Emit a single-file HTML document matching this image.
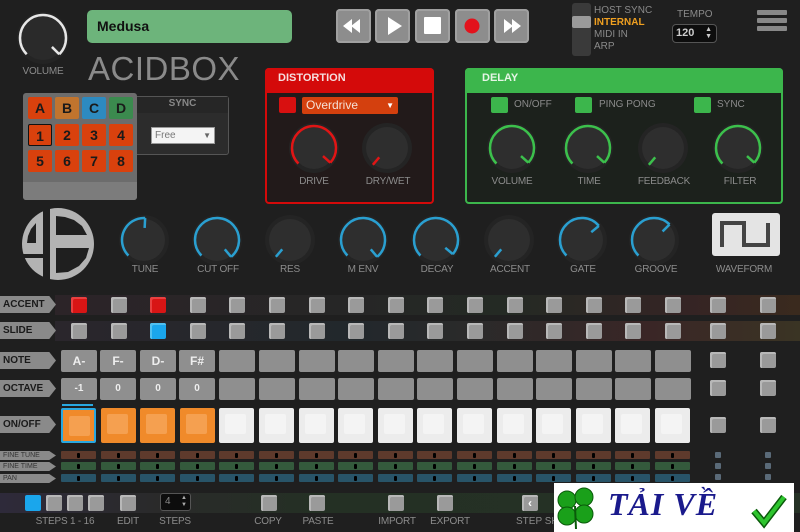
<!DOCTYPE html>
<html><head><meta charset="utf-8">
<style>
*{margin:0;padding:0;box-sizing:border-box}
body{width:800px;height:532px;background:#1f1f1f;overflow:hidden;position:relative;font-family:"Liberation Sans",sans-serif}
.a{position:absolute}
.lbl{position:absolute;z-index:6;color:#8c8c8c;font-size:10px;text-align:center;transform:translateX(-50%);white-space:nowrap;letter-spacing:-0.2px}
.tb{position:absolute;top:9px;width:35px;height:34px;background:#8d8d8d;border-radius:4px;box-shadow:inset 0 0 0 2px #a0a0a0}
.pb{position:absolute;width:24px;height:22px;background:#d9410d;border-radius:2px;font-weight:bold;font-size:14px;color:#1a1a1a;text-align:center;line-height:22px}
.tag{position:absolute;left:0;height:17px;background:#8a8a8a;color:#1a1a1a;font-weight:bold;font-size:10px;line-height:17px;padding-left:3px;clip-path:polygon(0 0,88% 0,100% 50%,88% 100%,0 100%)}
.sq{position:absolute;width:16px;height:16px;background:#9a9a9a;border-radius:2px;box-shadow:inset 2px 2px 0 #b8b8b8}
.nb{position:absolute;width:36px;height:22px;background:#8f8f8f;border-radius:2px;color:#eee;font-weight:bold;font-size:12px;text-align:center;line-height:22px}
.ob{position:absolute;width:35px;height:35px;border-radius:2px}
.st{position:absolute;width:35px;height:8px;border-radius:1px}
.st::after{content:"";position:absolute;left:16px;top:2px;width:3px;height:5px;background:#000;border-radius:1px}
</style></head><body>

<svg class="a" style="left:0;top:0;z-index:3" width="800" height="300" id="knobs"></svg>
<div class="lbl" style="left:43px;top:66px">VOLUME</div>

<div class="a" style="left:87px;top:10px;width:205px;height:33px;background:#6db47b;border-radius:5px;font-weight:bold;font-size:14px;color:#111;line-height:33px;padding-left:10px">Medusa</div>

<div class="tb" style="left:336px"></div>
<div class="tb" style="left:375px"></div>
<div class="tb" style="left:415px"></div>
<div class="tb" style="left:455px"></div>
<div class="tb" style="left:494px"></div>
<svg class="a" style="left:336px;top:9px" width="200" height="34">
<polygon points="7,17 16,10 16,24" fill="#fff"/><polygon points="15,17 24,10 24,24" fill="#fff"/>
<polygon points="52,8 66,17 52,26" fill="#fff"/>
<rect x="88" y="8" width="17" height="17" rx="1" fill="#fff"/>
<circle cx="136" cy="17" r="7.5" fill="#e3121c"/>
<polygon points="168,10 177,17 168,24" fill="#fff"/><polygon points="176,10 185,17 176,24" fill="#fff"/>
</svg>

<div class="a" style="left:88px;top:50px;font-size:33px;color:#8a8a8a;letter-spacing:0.5px">ACIDBOX</div>

<div class="a" style="left:572px;top:3px;width:19px;height:53px;background:#3a3a3a;border-radius:3px"></div>
<div class="a" style="left:572px;top:16px;width:19px;height:12px;background:#9a9a9a;border-radius:2px"></div>
<div class="a" style="left:594px;top:5px;font-size:10px;line-height:12px;color:#8a8a8a">HOST SYNC<br><span style="color:#f0a020;font-weight:bold">INTERNAL</span><br>MIDI IN<br>ARP</div>
<div class="a" style="left:677px;top:9px;font-size:10px;color:#8a8a8a">TEMPO</div>
<div class="a" style="left:672px;top:24px;width:45px;height:19px;background:#0d0d0d;border:1px solid #555;border-radius:4px;color:#ccc;font-weight:bold;font-size:11px;line-height:17px;padding-left:3px">120<span style="position:absolute;right:4px;top:1px;font-size:7px;line-height:7px">▲<br>▼</span></div>
<div class="a" style="left:757px;top:10px;width:30px;height:5px;background:#888;border-radius:1px"></div>
<div class="a" style="left:757px;top:18px;width:30px;height:5px;background:#888;border-radius:1px"></div>
<div class="a" style="left:757px;top:26px;width:30px;height:5px;background:#888;border-radius:1px"></div>

<div class="a" style="left:23px;top:93px;width:114px;height:107px;background:#6c6c6c;border-radius:3px"></div>
<div class="a" style="left:23px;top:182px;width:114px;height:18px;background:#7c7c7c;border-radius:0 0 3px 3px"></div>
<div class="pb" style="left:28px;top:97px">A</div>
<div class="pb" style="left:55px;top:97px;background:#c0742e">B</div>
<div class="pb" style="left:82px;top:97px;background:#2d8ac0">C</div>
<div class="pb" style="left:109px;top:97px;background:#3b8a4e">D</div>
<div class="pb" style="left:28px;top:124px;border:1px solid #111">1</div>
<div class="pb" style="left:55px;top:124px">2</div>
<div class="pb" style="left:82px;top:124px">3</div>
<div class="pb" style="left:109px;top:124px">4</div>
<div class="pb" style="left:28px;top:150px">5</div>
<div class="pb" style="left:55px;top:150px">6</div>
<div class="pb" style="left:82px;top:150px">7</div>
<div class="pb" style="left:109px;top:150px">8</div>

<div class="a" style="left:137px;top:96px;width:92px;height:59px;background:#2c2c2c;border:1px solid #555;border-left:none;border-radius:0 3px 3px 0"></div>
<div class="a" style="left:137px;top:97px;width:91px;height:16px;background:#262626;color:#888;font-weight:bold;font-size:10px;text-align:center;line-height:14px">SYNC</div>
<div class="a" style="left:151px;top:127px;width:64px;height:17px;background:#f4f4f4;border:1px solid #999;font-size:10px;color:#777;line-height:15px;padding-left:3px">Free<span style="position:absolute;right:3px;top:0;font-size:8px;color:#666">▼</span></div>

<div class="a" style="left:265px;top:68px;width:169px;height:136px;background:#221a1a;border:2px solid #d40a0a;border-radius:4px"></div>
<div class="a" style="left:265px;top:68px;width:169px;height:25px;background:#d40a0a;border-radius:4px 4px 0 0;color:#f5dede;font-weight:bold;font-size:11px;padding:4px 0 0 13px">DISTORTION</div>
<div class="a" style="left:279px;top:97px;width:17px;height:16px;background:#d81010;border-radius:2px"></div>
<div class="a" style="left:302px;top:97px;width:96px;height:17px;background:#d4400e;border-radius:2px;color:#f5e0d6;font-size:12px;line-height:16px;padding-left:4px">Overdrive<span style="position:absolute;right:4px;top:1px;font-size:8px;color:#fff">▼</span></div>
<div class="lbl" style="left:314px;top:176px">DRIVE</div>
<div class="lbl" style="left:388px;top:176px">DRY/WET</div>

<div class="a" style="left:465px;top:68px;width:318px;height:136px;background:#1c211c;border:2px solid #3cb64c;border-radius:4px"></div>
<div class="a" style="left:465px;top:68px;width:318px;height:25px;background:#3cb64c;border-radius:4px 4px 0 0;color:#e6f5e6;font-weight:bold;font-size:11px;padding:4px 0 0 17px">DELAY</div>
<div class="a" style="left:491px;top:97px;width:17px;height:16px;background:#3cb64c;border-radius:2px"></div>
<div class="a" style="left:575px;top:97px;width:17px;height:16px;background:#3cb64c;border-radius:2px"></div>
<div class="a" style="left:694px;top:97px;width:17px;height:16px;background:#3cb64c;border-radius:2px"></div>
<div class="a" style="left:514px;top:99px;font-size:10px;color:#8a8a8a">ON/OFF</div>
<div class="a" style="left:599px;top:99px;font-size:10px;color:#8a8a8a">PING PONG</div>
<div class="a" style="left:717px;top:99px;font-size:10px;color:#8a8a8a">SYNC</div>
<div class="lbl" style="left:512px;top:176px">VOLUME</div>
<div class="lbl" style="left:589px;top:176px">TIME</div>
<div class="lbl" style="left:664px;top:176px">FEEDBACK</div>
<div class="lbl" style="left:740px;top:176px">FILTER</div>

<svg class="a" style="left:20px;top:206px;z-index:7" width="76" height="76" viewBox="0 0 76 76">
<circle cx="38" cy="38" r="36" fill="#b3b3b3"/>
<rect x="23" y="0" width="7" height="76" fill="#1f1f1f"/>
<rect x="0" y="48" width="24" height="4" fill="#1f1f1f"/>
<polygon points="36,10 36,29 67,29 62,20 54,14 45,11" fill="#1f1f1f"/>
<polygon points="36,42 69,42 66,52 59,60 48,66 36,67" fill="#1f1f1f"/>
<polygon points="16,17 16,37 7,37 8,30 11,23" fill="#1f1f1f"/>
</svg>
<div class="lbl" style="left:145px;top:264px">TUNE</div>
<div class="lbl" style="left:218px;top:264px">CUT OFF</div>
<div class="lbl" style="left:290px;top:264px">RES</div>
<div class="lbl" style="left:363px;top:264px">M ENV</div>
<div class="lbl" style="left:437px;top:264px">DECAY</div>
<div class="lbl" style="left:510px;top:264px">ACCENT</div>
<div class="lbl" style="left:583px;top:264px">GATE</div>
<div class="lbl" style="left:656px;top:264px">GROOVE</div>
<div class="lbl" style="left:744px;top:264px">WAVEFORM</div>
<div class="a" style="left:712px;top:213px;width:68px;height:43px;background:#e4e4e4;border-radius:3px"></div>
<svg class="a" style="left:712px;top:213px" width="68" height="43"><path d="M10 34 V10 H32 V32 H56 V10" stroke="#444" stroke-width="4" fill="none"/></svg>

<div class="a" style="left:55px;top:295px;width:745px;height:20px;background:linear-gradient(90deg,#2c2428,#262626 40%,#242a24 60%,#352424 85%,#3a2a1e)"></div>
<div class="a" style="left:55px;top:321px;width:745px;height:20px;background:linear-gradient(90deg,#2a262c,#22282c 40%,#2a2a2a 55%,#3a2626 80%,#3a3424)"></div>
<div class="tag" style="top:296px;width:56px">ACCENT</div>
<div class="tag" style="top:322px;width:56px">SLIDE</div>
<div class="tag" style="top:352px;width:56px">NOTE</div>
<div class="tag" style="top:380px;width:56px">OCTAVE</div>
<div class="tag" style="top:416px;width:56px">ON/OFF</div>
<div class="tag" style="top:451px;width:56px;height:9px;line-height:9px;font-size:7px;font-weight:normal;color:#333">FINE TUNE</div>
<div class="tag" style="top:462px;width:56px;height:9px;line-height:9px;font-size:7px;font-weight:normal;color:#333">FINE TIME</div>
<div class="tag" style="top:474px;width:56px;height:9px;line-height:9px;font-size:7px;font-weight:normal;color:#333">PAN</div>
<div id="seq"></div>
<div class="nb" style="left:61px;top:350px">A-</div>
<div class="nb" style="left:100px;top:350px">F-</div>
<div class="nb" style="left:140px;top:350px">D-</div>
<div class="nb" style="left:179px;top:350px">F#</div>
<div class="nb" style="left:61px;top:378px;font-size:10px">-1</div>
<div class="nb" style="left:100px;top:378px;font-size:10px">0</div>
<div class="nb" style="left:140px;top:378px;font-size:10px">0</div>
<div class="nb" style="left:179px;top:378px;font-size:10px">0</div>
<div class="a" style="left:62px;top:404px;width:31px;height:2px;background:#29a8e0"></div>

<div class="a" style="left:0;top:493px;width:800px;height:20px;background:linear-gradient(90deg,#2e2a3a,#2a2a2a 20%,#243024 40%,#263226)"></div>
<div class="a" style="left:25px;top:495px;width:16px;height:16px;background:#1aa6ec;border-radius:2px"></div>
<div class="sq" style="left:46px;top:495px"></div>
<div class="sq" style="left:67px;top:495px"></div>
<div class="sq" style="left:88px;top:495px"></div>
<div class="sq" style="left:120px;top:495px"></div>
<div class="a" style="left:160px;top:493px;width:31px;height:18px;background:#0d0d0d;border:1px solid #555;border-radius:3px;color:#888;font-size:10px;padding-left:4px;line-height:16px">4<span style="position:absolute;right:3px;top:1px;font-size:6px;line-height:7px;color:#aaa">▲<br>▼</span></div>
<div class="sq" style="left:261px;top:495px"></div>
<div class="sq" style="left:309px;top:495px"></div>
<div class="sq" style="left:388px;top:495px"></div>
<div class="sq" style="left:437px;top:495px"></div>
<div class="sq" style="left:522px;top:495px;color:#fff;font-size:12px;text-align:center;line-height:16px;font-weight:bold">‹</div>
<div class="lbl" style="left:65px;top:516px">STEPS 1 - 16</div>
<div class="lbl" style="left:128px;top:516px">EDIT</div>
<div class="lbl" style="left:175px;top:516px">STEPS</div>
<div class="lbl" style="left:268px;top:516px">COPY</div>
<div class="lbl" style="left:318px;top:516px">PASTE</div>
<div class="lbl" style="left:397px;top:516px">IMPORT</div>
<div class="lbl" style="left:450px;top:516px">EXPORT</div>
<div class="a" style="left:516px;top:516px;font-size:10px;color:#8c8c8c">STEP SH</div>

<div class="a" style="left:554px;top:483px;width:240px;height:49px;background:#fff;z-index:8"></div>
<svg class="a" style="left:554px;top:483px;z-index:9" width="240" height="49">
<g fill="#1aa01a" stroke="#0a5a0a" stroke-width="1">
<circle cx="13" cy="17" r="9"/><circle cx="30" cy="14" r="9"/><circle cx="13" cy="33" r="9"/><circle cx="30" cy="31" r="9"/>
</g>
<path d="M21 23 L22 46" stroke="#0a5a0a" stroke-width="2"/>
<path d="M200 28 L210 40 L230 14" stroke="#0a5a0a" stroke-width="7" fill="none"/>
<path d="M200 28 L210 40 L230 14" stroke="#2ec52e" stroke-width="4" fill="none"/>
</svg>
<div class="a" style="left:608px;top:486px;z-index:9;font-family:'Liberation Serif',serif;font-style:italic;font-weight:bold;font-size:32px;color:#1a1a8c;letter-spacing:1px">TẢI VỀ</div>

<script>
var s=document.getElementById('knobs'),h='';
function P(cx,cy,r,a){a=(a-90)*Math.PI/180;return [cx+r*Math.cos(a),cy+r*Math.sin(a)];}
function knob(cx,cy,r,v,col,body){
 h+='<circle cx="'+cx+'" cy="'+cy+'" r="'+(r+3)+'" fill="#242424"/>';
 h+='<circle cx="'+cx+'" cy="'+cy+'" r="'+(r-1)+'" fill="'+(body||'#2e2e2e')+'"/>';
 var a0=-135;
 if(v>a0+5){var p0=P(cx,cy,r,a0),p1=P(cx,cy,r,v);
 h+='<path d="M'+p0[0]+' '+p0[1]+' A'+r+' '+r+' 0 '+((v-a0)>180?1:0)+' 1 '+p1[0]+' '+p1[1]+'" stroke="'+col+'" stroke-width="2.5" fill="none"/>';}
 var q0=P(cx,cy,r*0.55,v),q1=P(cx,cy,r,v);
 h+='<line x1="'+q0[0]+'" y1="'+q0[1]+'" x2="'+q1[0]+'" y2="'+q1[1]+'" stroke="'+col+'" stroke-width="2.5"/>';
}
knob(43,38,23,135,'#e6e6e6','#2a2a2a');
knob(314,148,22,132,'#e01515');knob(387,148,22,-140,'#e01515');
knob(512,148,22,132,'#3cc04c');knob(588,148,22,132,'#3cc04c');knob(663,148,22,-140,'#3cc04c');knob(738,148,22,132,'#3cc04c');
var bx=[144,217,290,363,436,509,582,654],bv=[3,140,-140,140,130,-140,50,45];
for(var i=0;i<8;i++)knob(bx[i],240,22,bv[i],'#2a9fd0');
s.innerHTML=h;
var q='',xs=[];for(var i=0;i<16;i++)xs.push(Math.round(71+i*39.6));
for(var i=0;i<16;i++){var x=xs[i];
 var ac=(i==0||i==2)?'background:#d81515;box-shadow:inset 2px 2px 0 #e84040':'';
 q+='<div class="sq" style="left:'+x+'px;top:297px;'+ac+'"></div>';
 var sl=(i==2)?'background:#1aa6ec;box-shadow:inset 2px 2px 0 #50c0f0':'';
 q+='<div class="sq" style="left:'+x+'px;top:323px;'+sl+'"></div>';
 var nx=x-10;
 if(i>=4){q+='<div class="nb" style="left:'+nx+'px;top:350px"></div><div class="nb" style="left:'+nx+'px;top:378px"></div>';}
 var on=i<4;
 q+='<div class="ob" style="left:'+nx+'px;top:408px;width:35px;background:'+(on?'#f08a2a':'#ececec')+';'+(i==0?'border:2px solid #29a8e0;':'')+'"><div style="position:absolute;left:6px;top:6px;width:21px;height:20px;background:'+(on?'#f5a050':'#f4f4f4')+';border-radius:2px"></div></div>';
 q+='<div class="st" style="left:'+nx+'px;top:451px;background:#5e3a2c"></div>';
 q+='<div class="st" style="left:'+nx+'px;top:462px;background:#345a3c"></div>';
 q+='<div class="st" style="left:'+nx+'px;top:474px;background:#285468"></div>';
}
[710,760].forEach(function(x){
 [297,323,352,380,417].forEach(function(y){q+='<div class="sq" style="left:'+x+'px;top:'+y+'px"></div>';});
 [452,463,474].forEach(function(y){q+='<div class="a" style="left:'+(x+5)+'px;top:'+y+'px;width:6px;height:6px;background:#5a6a78;border-radius:1px"></div>';});
});
document.getElementById('seq').innerHTML=q;
</script>
</body></html>
